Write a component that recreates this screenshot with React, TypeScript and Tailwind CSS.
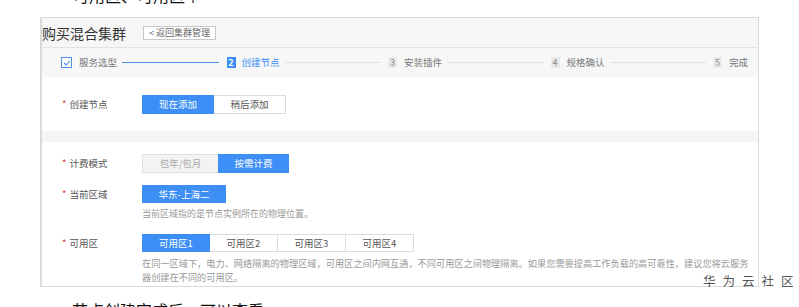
import React from 'react';

const FONT = { fontFamily: '"Noto Sans CJK SC", "Liberation Sans", sans-serif' };

const STEPS = [
  { n: '3', label: '安装插件' },
  { n: '4', label: '规格确认' },
  { n: '5', label: '完成' },
] as const;

const ZONES = ['可用区1', '可用区2', '可用区3', '可用区4'] as const;

function Label({ text }: { text: string }) {
  return (
    <div className="flex w-[100px] shrink-0 items-center pl-[20px] text-[9.5px] text-[#555]">
      <span className="mr-[3px] text-[#e4393c]">*</span>
      {text}
    </div>
  );
}

function StepLine({ active }: { active?: boolean }) {
  return (
    <div
      className={
        active
          ? 'ml-[5px] mr-[8px] h-px flex-1 bg-[#4d92e8]'
          : 'ml-[5px] mr-[7px] h-px flex-1 bg-[#e2e2e2]'
      }
    />
  );
}

export default function App() {
  return (
    <div className="relative h-[307px] w-[799px] overflow-hidden bg-white" style={FONT}>
      {/* cut-off text from the page above */}
      <div className="h-[17px] overflow-hidden pl-[73px]">
        <div className="-mt-[13px] text-[16px] leading-[16px] text-[#111]">可用区、可用区↑</div>
      </div>

      <div className="ml-[40px] w-[719px] border border-l-2 border-[#dadada]">
        {/* title */}
        <div className="flex h-[29px] items-center bg-[#f6f6f6]">
          <span className="text-[14px] leading-none text-[#333]">购买混合集群</span>
          <span className="ml-[17px] flex h-[14px] items-center border border-[#c8c8c8] bg-white px-[5px] text-[9px] leading-none text-[#666]">
            &lt; 返回集群管理
          </span>
        </div>

        {/* steps */}
        <div className="flex h-[30px] items-center border-t border-[#e3e3e3] bg-[#f7f7f7] pl-[19px] pr-[10px] text-[9.5px] text-[#777]">
          <span className="flex h-[11px] w-[11px] items-center justify-center border border-[#4d92e8] bg-white">
            <svg viewBox="0 0 10 10" className="h-[8px] w-[8px]">
              <path d="M1.5 5 L4 7.5 L8.5 2.5" fill="none" stroke="#3d8ef5" strokeWidth="1.4" />
            </svg>
          </span>
          <span className="ml-[7px]">服务选型</span>
          <StepLine active />
          <span className="flex h-[11px] w-[9px] items-center justify-center bg-[#3d8ef5] text-[9px] font-bold text-white">2</span>
          <span className="ml-[6px] text-[#3d8ef5]">创建节点</span>
          {STEPS.map((s) => (
            <React.Fragment key={s.n}>
              <StepLine />
              <span className="flex h-[11px] w-[9px] items-center justify-center bg-[#e9e9e9] text-[9px] text-[#888]">
                {s.n}
              </span>
              <span className="ml-[7px]">{s.label}</span>
            </React.Fragment>
          ))}
        </div>

        {/* create node */}
        <div className="flex pb-[17px] pt-[18px]">
          <Label text="创建节点" />
          <div className="flex h-[19px] text-[9.5px]">
            <span className="flex w-[72px] items-center justify-center bg-[#3d8ef5] text-white">现在添加</span>
            <span className="flex w-[72px] items-center justify-center border border-l-0 border-[#dcdcdc] text-[#555]">
              稍后添加
            </span>
          </div>
        </div>

        <div className="h-[11px] bg-[#f5f5f5]" />

        {/* billing, region, zone */}
        <div className="flex flex-col pb-[2px] pt-[12px]">
          <div className="flex">
            <Label text="计费模式" />
            <div className="flex h-[19px] text-[9.5px]">
              <span className="flex w-[76px] items-center justify-center border border-r-0 border-[#e0e0e0] bg-[#f3f3f3] text-[#aaa]">
                包年/包月
              </span>
              <span className="flex w-[71px] items-center justify-center bg-[#3d8ef5] text-white">按需计费</span>
            </div>
          </div>

          <div className="mt-[12px] flex">
            <Label text="当前区域" />
            <span className="flex h-[18px] w-[84px] items-center justify-center bg-[#3d8ef5] text-[9.5px] text-white">
              华东-上海二
            </span>
          </div>
          <div className="mt-[5px] pl-[100px] text-[9px] leading-[12px] text-[#999]">
            当前区域指的是节点实例所在的物理位置。
          </div>

          <div className="mt-[14px] flex">
            <Label text="可用区" />
            <div className="flex h-[18px] text-[9.5px]">
              {ZONES.map((z, i) => (
                <span
                  key={z}
                  className={
                    i === 0
                      ? 'flex w-[68px] items-center justify-center bg-[#3d8ef5] text-white'
                      : 'flex w-[68px] items-center justify-center border border-l-0 border-[#dcdcdc] text-[#555]'
                  }
                >
                  {z}
                </span>
              ))}
            </div>
          </div>
          <div className="mt-[4px] pl-[100px] pr-[7px] text-[9.2px] leading-[14px] text-[#999]">
            在同一区域下，电力、网络隔离的物理区域，可用区之间内网互通，不同可用区之间物理隔离。如果您需要提高工作负载的高可靠性，建议您将云服务器创建在不同的可用区。
          </div>
        </div>
      </div>

      {/* cut-off text below */}
      <div className="mt-[15px] pl-[72px] text-[16px] leading-[16px] text-[#111]">节点创建完成后，可以查看</div>

      {/* watermark */}
      <div className="absolute left-[703px] top-[275px] whitespace-nowrap text-[12.5px] leading-none tracking-[7px] text-[#555]">
        华为云社区
      </div>
    </div>
  );
}
